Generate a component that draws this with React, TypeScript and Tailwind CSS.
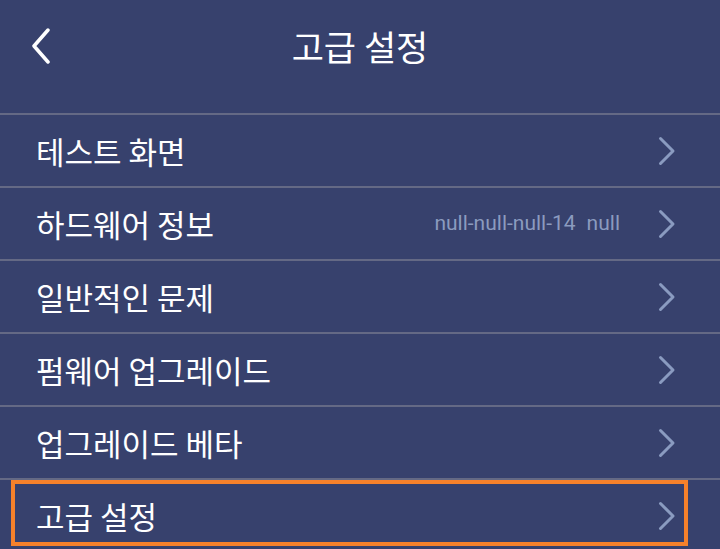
import React from "react"

const rows = [
  { label: "테스트 화면" },
  { label: "하드웨어 정보", value: "null-null-null-14", extra: "null" },
  { label: "일반적인 문제" },
  { label: "펌웨어 업그레이드" },
  { label: "업그레이드 베타" },
  { label: "고급 설정", highlight: true },
]

function ChevronRight() {
  return (
    <svg width="18" height="30" viewBox="0 0 18 30" fill="none">
      <path d="M2.5 2.5 L15 15 L2.5 27.5" stroke="#8a9bc0" strokeWidth="3" strokeLinecap="round" strokeLinejoin="round" />
    </svg>
  )
}

function ChevronLeft() {
  return (
    <svg width="20" height="36" viewBox="0 0 20 36" fill="none">
      <path d="M17 2 L3 18 L17 34" stroke="#ffffff" strokeWidth="3.5" strokeLinecap="round" strokeLinejoin="round" />
    </svg>
  )
}

export default function App() {
  return (
    <div className="w-[720px] h-[549px] overflow-hidden bg-[#37416d] text-white font-['Roboto','Noto_Sans_CJK_KR',sans-serif]">
      {/* Header */}
      <div className="relative h-[113px] flex items-center justify-center pb-[22px]">
        <button className="absolute left-[31px] top-[28px]">
          <ChevronLeft />
        </button>
        <h1 className="text-[35px] leading-none font-['Noto_Sans_CJK_KR',sans-serif]">고급 설정</h1>
      </div>

      <div className="flex flex-col">
        {rows.map((row, idx) => (
          <div key={idx} className="relative border-t-2 border-[#646985] h-[73px] flex items-center pl-[36px] pr-[44px]">
            <span className="flex-1 text-[31px] leading-none font-['Noto_Sans_CJK_KR',sans-serif]">{row.label}</span>
            {row.value && (
              <span className="mr-[38px] flex gap-[11px] text-[21px] text-[#8b9bbf] font-['Roboto',sans-serif]">
                <span>{row.value}</span>
                <span>{row.extra}</span>
              </span>
            )}
            <ChevronRight />
            {row.highlight && (
              <div className="absolute left-[11px] top-0 w-[677px] h-[66px] border-4 border-[#f6812b]" />
            )}
          </div>
        ))}
      </div>
    </div>
  )
}
